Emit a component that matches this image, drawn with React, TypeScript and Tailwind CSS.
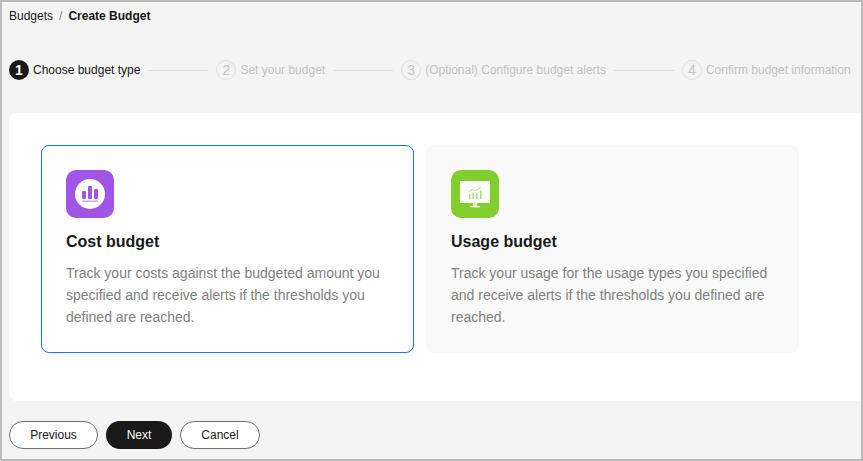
import React from 'react';

const FONT = "font-['Liberation_Sans',Arial,sans-serif]";

const STEPS = [
  { n: 2, label: 'Set your budget', line: 'w-[60px]' },
  { n: 3, label: '(Optional) Configure budget alerts', line: 'w-[60px]' },
  { n: 4, label: 'Confirm budget information', line: 'w-[60px]' },
];

const CostIcon = () => (
  <svg width="48" height="48" viewBox="0 0 48 48" className="block">
    <rect width="48" height="48" rx="10" fill="#a155e7" />
    <circle cx="24" cy="24" r="15" fill="#fff" />
    <rect x="16" y="21" width="4" height="8" rx="1" fill="#a155e7" />
    <rect x="22" y="16" width="4" height="13" rx="1" fill="#a155e7" />
    <rect x="28" y="19" width="4" height="10" rx="1" fill="#a155e7" />
    <rect x="16" y="30.5" width="16" height="1.5" fill="#cfa8f3" />
  </svg>
);

const UsageIcon = () => (
  <svg width="48" height="48" viewBox="0 0 48 48" className="block">
    <rect width="48" height="48" rx="10" fill="#80cf2c" />
    <rect x="9" y="11" width="30" height="22" rx="1" fill="#fff" />
    <rect x="22" y="33" width="4" height="3" fill="#d5f0b8" />
    <rect x="19" y="36" width="10" height="1.3" fill="#fff" />
    <g fill="#a6de6c">
      <rect x="18" y="24" width="1.5" height="5" />
      <rect x="21.5" y="22.5" width="1.5" height="6.5" />
      <rect x="25" y="23.5" width="1.5" height="5.5" />
      <rect x="29" y="20.5" width="1.5" height="8.5" />
    </g>
    <path d="M18 22 C20 19 23 20 25 20.5 L30 17" fill="none" stroke="#a6de6c" strokeWidth="1" />
  </svg>
);

const BudgetCard = ({ icon, title, text, selected }: { icon: React.ReactNode; title: string; text: string; selected?: boolean }) => (
  <div className={`w-[373px] h-[208px] rounded-lg pt-6 px-6 ${selected ? 'border border-[#1476ff] bg-white' : 'border border-[#f9f9f9] bg-[#f9f9f9]'}`}>
    {icon}
    <h3 className="mt-[12px] text-base leading-[24px] font-bold text-[#191919]">{title}</h3>
    <p className="mt-[8px] text-sm leading-[22px] text-[#808080]">{text}</p>
  </div>
);

export default function App() {
  return (
    <div className={`w-[863px] h-[461px] overflow-hidden border-2 border-[#bbbbbb] bg-[#f4f4f4] flex flex-col ${FONT}`}>
      <div className="pl-[7px] pt-[7px] h-[58px] shrink-0 text-xs leading-[14px] text-[#191919] flex items-start">
        <span>Budgets</span>
        <span className="mx-[6px] text-[#808080]">/</span>
        <span className="font-bold text-[#191919]">Create Budget</span>
      </div>

      <div className="pl-[7px] h-[20px] shrink-0 flex items-center text-xs whitespace-nowrap">
        <span className="w-5 h-5 rounded-full bg-[#191919] text-white text-sm font-bold flex items-center justify-center">1</span>
        <span className="ml-1 text-[#191919]">Choose budget type</span>
        {STEPS.map(s => (
          <React.Fragment key={s.n}>
            <span className={`${s.line} h-px mx-2 bg-[#dfdfdf]`} />
            <span className="w-5 h-5 rounded-full border border-[#dfdfdf] text-[#c2c2c2] text-sm flex items-center justify-center">{s.n}</span>
            <span className="ml-1 text-[#c2c2c2]">{s.label}</span>
          </React.Fragment>
        ))}
      </div>

      <div className="mt-[33px] ml-[7px] h-[288px] shrink-0 bg-white rounded-l-lg pt-8 pl-8 flex gap-3">
        <BudgetCard
          selected
          icon={<CostIcon />}
          title="Cost budget"
          text="Track your costs against the budgeted amount you specified and receive alerts if the thresholds you defined are reached."
        />
        <BudgetCard
          icon={<UsageIcon />}
          title="Usage budget"
          text="Track your usage for the usage types you specified and receive alerts if the thresholds you defined are reached."
        />
      </div>

      <div className="mt-5 ml-[7px] flex gap-2 text-xs">
        <button className="w-[89px] h-[28px] rounded-full border border-[#707070] bg-white text-[#191919]">Previous</button>
        <button className="w-[66px] h-[28px] rounded-full bg-[#191919] text-white">Next</button>
        <button className="w-[80px] h-[28px] rounded-full border border-[#707070] bg-white text-[#191919]">Cancel</button>
      </div>
    </div>
  );
}
